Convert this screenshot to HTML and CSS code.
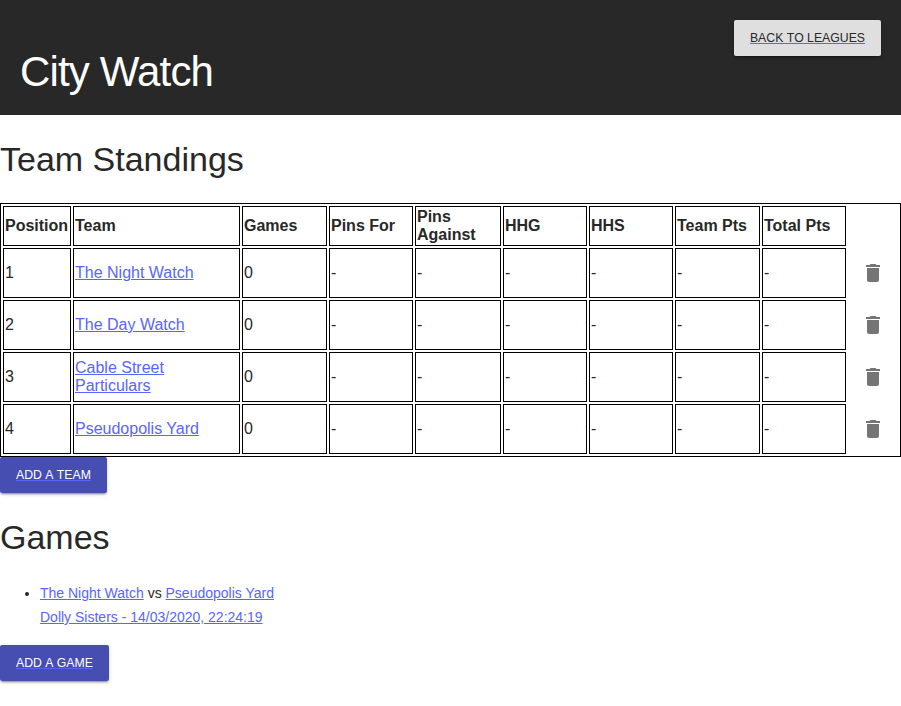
FILE: index.html
```html
<!DOCTYPE html>
<html lang="en">
<head>
<meta charset="utf-8">
<title>City Watch</title>
<link rel="stylesheet" href="styles.css">
</head>
<body>
<svg class="sprite" aria-hidden="true"><symbol id="trash" viewBox="0 0 24 24"><path d="M6 19c0 1.100.9 2 2 2h8c1.100 0 2-.9 2-2V7H6v12zM19 4h-3.500l-1-1h-5l-1 1H5v2h14V4z"/></symbol></svg>
<header class="header">
  <h1 class="title">City Watch</h1>
  <a class="button-link" href="#"><span class="button button-light">Back to leagues</span></a>
</header>
<main>
  <h2 class="heading">Team Standings</h2>
  <table class="standings">
    <colgroup><col class="c68"><col class="c167"><col class="c85"><col class="c84"><col class="c86"><col class="c84"><col class="c84"><col class="c85"><col class="c84"><col class="c50"></colgroup>
    <thead>
      <tr><th>Position</th><th>Team</th><th>Games</th><th>Pins For</th><th>Pins Against</th><th>HHG</th><th>HHS</th><th>Team Pts</th><th>Total Pts</th></tr>
    </thead>
    <tbody>
      <tr><td>1</td><td><a href="#">The Night Watch</a></td><td>0</td><td>-</td><td>-</td><td>-</td><td>-</td><td>-</td><td>-</td><td class="action"><svg class="icon"><use href="#trash"/></svg></td></tr>
      <tr><td>2</td><td><a href="#">The Day Watch</a></td><td>0</td><td>-</td><td>-</td><td>-</td><td>-</td><td>-</td><td>-</td><td class="action"><svg class="icon"><use href="#trash"/></svg></td></tr>
      <tr><td>3</td><td><a href="#">Cable Street Particulars</a></td><td>0</td><td>-</td><td>-</td><td>-</td><td>-</td><td>-</td><td>-</td><td class="action"><svg class="icon"><use href="#trash"/></svg></td></tr>
      <tr><td>4</td><td><a href="#">Pseudopolis Yard</a></td><td>0</td><td>-</td><td>-</td><td>-</td><td>-</td><td>-</td><td>-</td><td class="action"><svg class="icon"><use href="#trash"/></svg></td></tr>
    </tbody>
  </table>
  <a class="button-link" href="#"><span class="button">Add a team</span></a>
  <h2 class="heading">Games</h2>
  <ul class="games">
    <li><a href="#">The Night Watch</a> vs <a href="#">Pseudopolis Yard</a><br><a href="#">Dolly Sisters - 14/03/2020, 22:24:19</a></li>
  </ul>
  <a class="button-link" href="#"><span class="button">Add a game</span></a>
</main>
</body>
</html>
```
FILE: styles.css
```css
html, body { min-height: 100vh; }
body {
  margin: 0;
  background: #fff;
  color: #282828;
  font-family: "Liberation Sans", Arial, sans-serif;
  font-size: 16px;
}
a { color: #5865ff; }
.sprite { display: none; }
.header {
  display: flex;
  justify-content: space-between;
  align-items: flex-start;
  box-sizing: border-box;
  height: 115px;
  padding: 20px;
  background: #282828;
}
.title {
  margin: 28px 0 0;
  color: #fff;
  font-size: 42px;
  font-weight: 400;
  line-height: 48px;
  letter-spacing: -.02em;
}
.heading {
  margin: 24px 0;
  font-size: 34px;
  font-weight: 400;
  line-height: 40px;
}
.standings {
  width: 901px;
  table-layout: fixed;
  border: 1px solid #000;
  border-collapse: separate;
  border-spacing: 2px;
  line-height: 18px;
}
.c50 { width: 50px; }
.c68 { width: 68px; }
.c84 { width: 84px; }
.c85 { width: 85px; }
.c86 { width: 86px; }
.c167 { width: 167px; }
th, td {
  box-sizing: border-box;
  padding: 1px;
  border: 1px solid #000;
  text-align: left;
  vertical-align: middle;
}
th { height: 40px; }
td { height: 50px; }
.standings .action {
  padding: 0;
  border: 0;
  text-align: center;
}
.icon {
  display: block;
  width: 24px;
  height: 24px;
  margin: 0 auto;
  fill: #757575;
}
.button-link {
  display: block;
  width: fit-content;
  font-size: 12.25px;
  font-kerning: none;
}
.button {
  display: block;
  padding: 0 16px;
  border-radius: 2px;
  background: #464eb2;
  color: #fff;
  line-height: 36px;
  text-transform: uppercase;
  box-shadow: 0 3px 1px -2px rgba(0, 0, 0, .2), 0 2px 2px 0 rgba(0, 0, 0, .14), 0 1px 5px 0 rgba(0, 0, 0, .12);
}
.button-light {
  background: #dfdfdf;
  color: #282828;
}
.games {
  margin: 24px 0 16px;
  padding-left: 40px;
  font-size: 14px;
  line-height: 24px;
}
```
